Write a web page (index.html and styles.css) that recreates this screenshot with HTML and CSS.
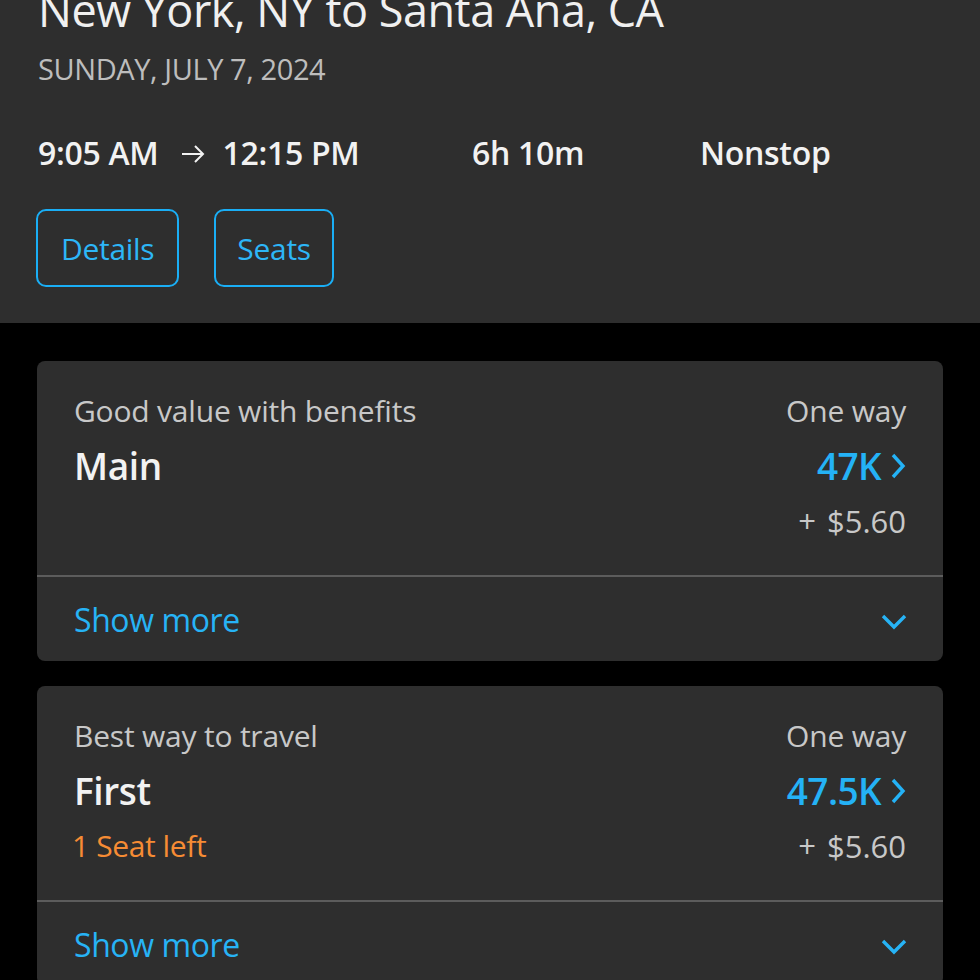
FILE: index.html
```html
<!DOCTYPE html>
<html>
<head>
  <meta charset="UTF-8">
  <title>Choose fare</title>
  <link rel="stylesheet" href="styles.css">
</head>
<body>
  <!-- Trip summary -->
  <div class="trip">
    <h1 class="route">New York, NY to Santa Ana, CA</h1>
    <div class="date">SUNDAY, JULY 7, 2024</div>
    <div class="times">
      <div class="times-span">9:05 AM
        <svg class="arrow" viewBox="0 0 26 20" width="26" height="20"><path d="M2 10 H23 M15 2 L23 10 L15 18" fill="none" stroke="currentColor" stroke-width="2"/></svg>
        12:15 PM</div>
      <div class="duration">6h 10m</div>
      <div class="stops">Nonstop</div>
    </div>
    <div class="trip-buttons">
      <button class="outline-btn">Details</button>
      <button class="outline-btn">Seats</button>
    </div>
  </div>

  <!-- Fare cards -->
  <div class="fares">
    <div class="fare-card">
      <div class="fare-body">
        <div class="fare-row">
          <span class="fare-desc">Good value with benefits</span>
          <span class="fare-desc">One way</span>
        </div>
        <div class="fare-row">
          <span class="fare-name">Main</span>
          <span class="fare-price">47K
            <svg class="chev-right" viewBox="0 0 16 28" width="16" height="28"><path d="M3 3 L13 14 L3 25" fill="none" stroke="currentColor" stroke-width="3.4"/></svg>
          </span>
        </div>
        <div class="fare-row">
          <span class="fare-note"></span>
          <span class="fare-tax">+ $5.60</span>
        </div>
      </div>
      <div class="fare-more">
        <span>Show more</span>
        <svg class="chev-down" viewBox="0 0 28 18" width="28" height="18"><path d="M3 3 L14 14 L25 3" fill="none" stroke="currentColor" stroke-width="3.4"/></svg>
      </div>
    </div>

    <div class="fare-card">
      <div class="fare-body">
        <div class="fare-row">
          <span class="fare-desc">Best way to travel</span>
          <span class="fare-desc">One way</span>
        </div>
        <div class="fare-row">
          <span class="fare-name">First</span>
          <span class="fare-price">47.5K
            <svg class="chev-right" viewBox="0 0 16 28" width="16" height="28"><path d="M3 3 L13 14 L3 25" fill="none" stroke="currentColor" stroke-width="3.4"/></svg>
          </span>
        </div>
        <div class="fare-row">
          <span class="fare-note seats-left">1 Seat left</span>
          <span class="fare-tax">+ $5.60</span>
        </div>
      </div>
      <div class="fare-more">
        <span>Show more</span>
        <svg class="chev-down" viewBox="0 0 28 18" width="28" height="18"><path d="M3 3 L14 14 L25 3" fill="none" stroke="currentColor" stroke-width="3.4"/></svg>
      </div>
    </div>
  </div>
</body>
</html>
```

FILE: styles.css
```css
* { box-sizing: border-box; }
body {
  margin: 0;
  background-color: #000;
  font-family: "Open Sans", Arial, sans-serif;
  color: #f2f2f2;
  overflow: hidden;
}
/* Trip summary header */
.trip {
  display: flow-root; /* keep the title's negative margin inside */
  background-color: #2e2e2e;
  padding: 0 38px;
  height: 323px;
}
.route {
  margin: -18px 0 0;
  font-size: 45px;
  font-weight: 400;
  letter-spacing: -0.5px;
  line-height: 56px;
  color: #f0f0f0;
  white-space: nowrap;
}
.date {
  margin-top: 13px;
  font-size: 29px;
  line-height: 36px;
  color: #bdbdbd;
  letter-spacing: -0.4px;
}
.times {
  display: flex;
  align-items: center;
  margin-top: 46px;
  font-size: 32px;
  font-weight: 600;
  letter-spacing: -0.3px;
  line-height: 40px;
}
.times-span {
  width: 434px;
  display: flex;
  align-items: center;
}
.arrow {
  margin: 2px 17px 0 21px;
}
.duration { width: 228px; }
.trip-buttons {
  display: flex;
  gap: 35px;
  margin-top: 36px;
  margin-left: -2px;
}
.outline-btn {
  height: 78px;
  padding: 0 23px;
  background: transparent;
  border: 2px solid #1aaef5;
  border-radius: 10px;
  color: #2db6f7;
  font-family: inherit;
  font-size: 30px;
  letter-spacing: -0.3px;
}
.outline-btn + .outline-btn { padding: 0 21px; }
/* Fare cards */
.fares {
  padding: 38px 37px 0;
  display: flex;
  flex-direction: column;
  gap: 25px;
}
.fare-card {
  background-color: #2e2e2e;
  border-radius: 8px;
}
.fare-body {
  padding: 28px 37px 0;
  height: 214px;
}
.fare-row {
  display: flex;
  justify-content: space-between;
  align-items: center;
}
.fare-desc {
  font-size: 30px;
  line-height: 44px;
  color: #c8c8c8;
  letter-spacing: -0.2px;
}
.fare-name {
  font-size: 37px;
  font-weight: 600;
  line-height: 66px;
  letter-spacing: -0.4px;
}
.fare-price {
  display: flex;
  align-items: center;
  gap: 9px;
  color: #24b2f6;
  font-size: 37px;
  font-weight: 600;
  line-height: 66px;
  letter-spacing: -0.6px;
}
.fare-tax, .fare-note {
  font-size: 31px;
  line-height: 44px;
  color: #c8c8c8;
  word-spacing: 3px;
}
.seats-left {
  color: #f68c34;
  margin-left: -2px;
  font-size: 30px;
  letter-spacing: -0.4px;
  word-spacing: 0;
}
.fare-more {
  border-top: 2px solid #5c5c5c;
  height: 86px;
  padding: 0 37px;
  display: flex;
  justify-content: space-between;
  align-items: center;
  color: #27b3f5;
  font-size: 32px;
  letter-spacing: -0.4px;
}
.chev-down { margin-top: 6px; margin-right: -2px; }
```
